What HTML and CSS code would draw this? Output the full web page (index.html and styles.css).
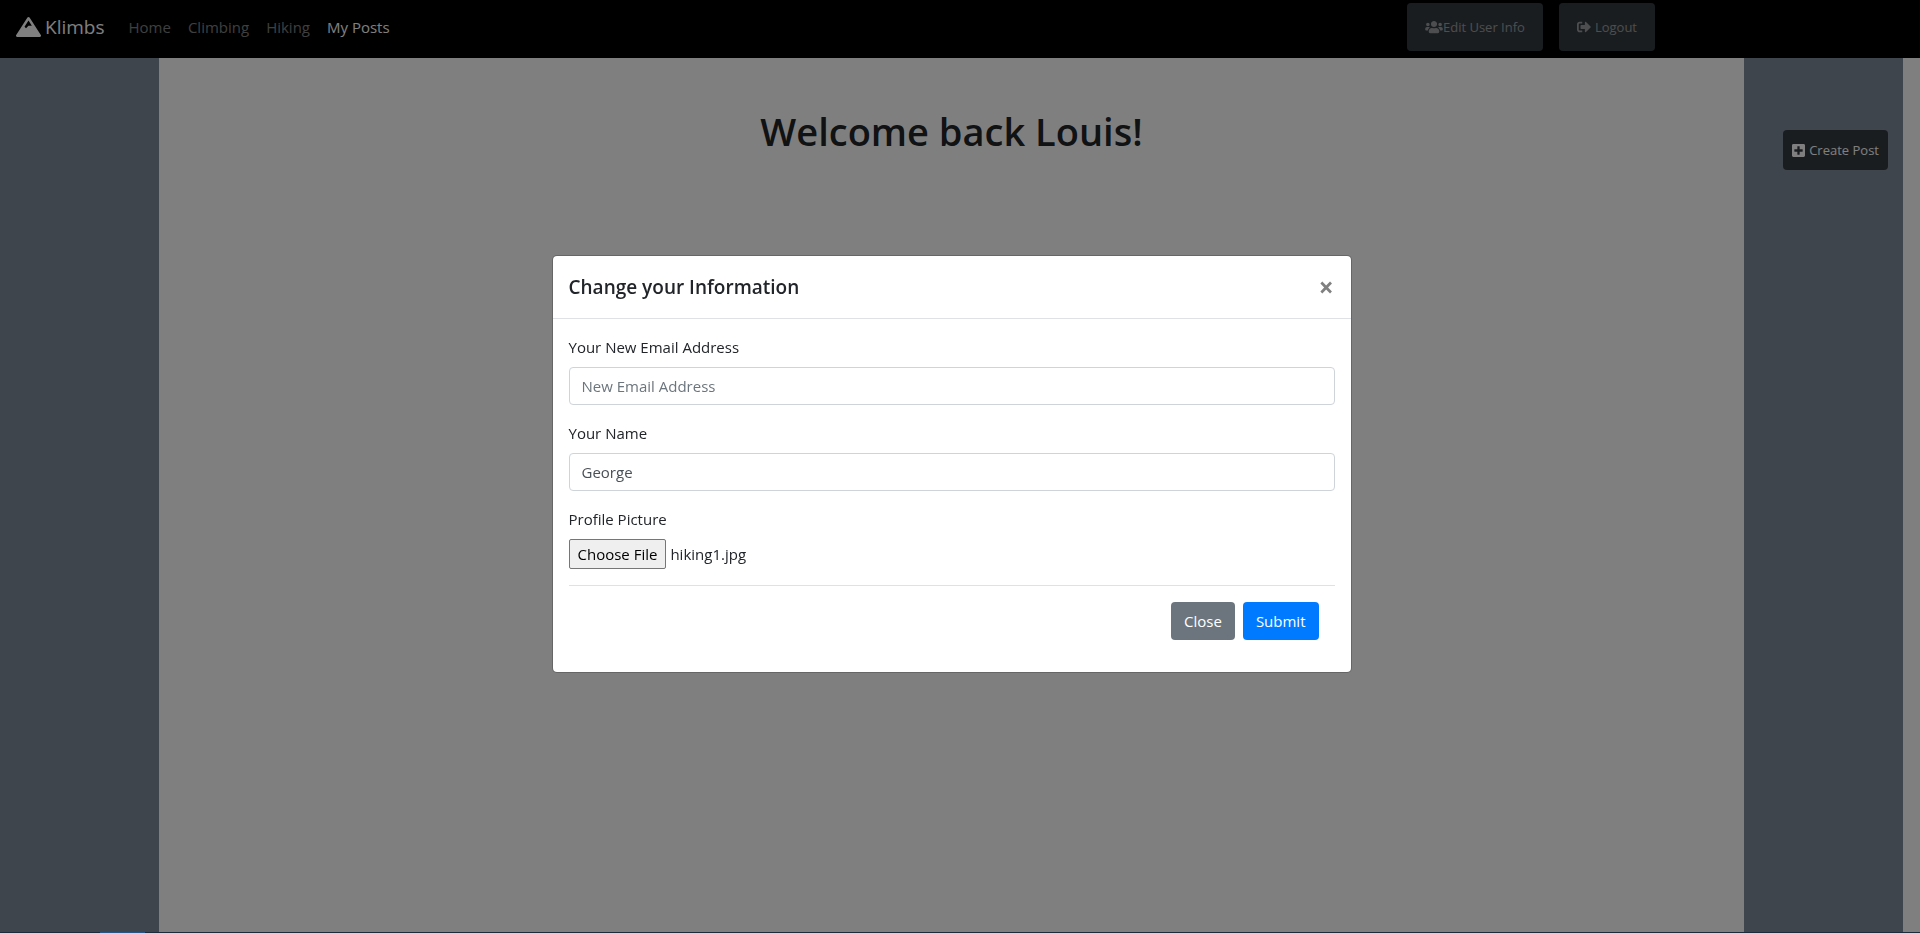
FILE: index.html
```html
<!DOCTYPE html>
<html lang="en">
<head>
<meta charset="utf-8">
<meta name="viewport" content="width=device-width, initial-scale=1">
<title>Klimbs - My Posts</title>
<link rel="stylesheet" href="styles.css">
</head>
<body>
<nav class="navbar">
  <a class="brand" href="#">
    <svg class="brand-icon" viewBox="0 0 640 512" aria-hidden="true"><path d="M634.92 462.7l-288-448C341.03 5.54 330.89 0 320 0s-21.03 5.54-26.92 14.7l-288 448a32.001 32.001 0 0 0-1.17 32.64A32.004 32.004 0 0 0 32 512h576c11.71 0 22.48-6.39 28.09-16.67a31.983 31.983 0 0 0-1.17-32.63zM320 91.18L405.39 224H320l-64 64-38.06-38.06L320 91.18z"/></svg>
    <span>Klimbs</span>
  </a>
  <div class="nav-links">
    <a class="nav-link" href="#">Home</a>
    <a class="nav-link" href="#">Climbing</a>
    <a class="nav-link" href="#">Hiking</a>
    <a class="nav-link active" href="#">My Posts</a>
  </div>
  <div class="nav-actions">
    <button class="btn-dark btn-nav" type="button"><svg class="icon-users" viewBox="0 0 640 512" aria-hidden="true"><path d="M96 224c35.3 0 64-28.7 64-64s-28.7-64-64-64-64 28.7-64 64 28.7 64 64 64zm448 0c35.3 0 64-28.7 64-64s-28.7-64-64-64-64 28.7-64 64 28.7 64 64 64zm32 32h-64c-17.6 0-33.5 7.1-45.1 18.6 40.3 22.1 68.9 62 75.1 109.4h66c17.7 0 32-14.3 32-32v-32c0-35.3-28.7-64-64-64zm-256 0c61.9 0 112-50.1 112-112S381.9 32 320 32 208 82.1 208 144s50.1 112 112 112zm76.8 32h-8.3c-20.8 10-43.9 16-68.5 16s-47.6-6-68.5-16h-8.3C179.6 288 128 339.6 128 403.2V432c0 26.5 21.5 48 48 48h288c26.5 0 48-21.5 48-48v-28.8c0-63.6-51.6-115.2-115.2-115.2zm-223.7-13.4C161.5 263.1 145.6 256 128 256H64c-35.3 0-64 28.7-64 64v32c0 17.7 14.3 32 32 32h65.9c6.3-47.4 34.9-87.3 75.2-109.4z"/></svg><span>Edit User Info</span></button>
    <button class="btn-dark btn-nav spaced" type="button"><svg class="icon" viewBox="0 0 512 512" aria-hidden="true"><path d="M497 273L329 441c-15 15-41 4.5-41-17v-96H152c-13.3 0-24-10.7-24-24v-96c0-13.3 10.7-24 24-24h136V88c0-21.4 25.9-32 41-17l168 168c9.3 9.4 9.3 24.6 0 34zM192 436v-40c0-6.6-5.4-12-12-12H96c-17.7 0-32-14.3-32-32V160c0-17.7 14.3-32 32-32h84c6.6 0 12-5.4 12-12V76c0-6.6-5.4-12-12-12H96c-53 0-96 43-96 96v192c0 53 43 96 96 96h84c6.6 0 12-5.4 12-12z"/></svg><span>Logout</span></button>
  </div>
</nav>

<div class="columns">
  <aside class="side"></aside>
  <main class="content">
    <h1 class="welcome">Welcome back Louis!</h1>
  </main>
  <aside class="side side-right">
    <button class="btn-dark btn-create" type="button"><svg class="icon-plus" viewBox="0 0 448 512" aria-hidden="true"><path d="M400 32H48C21.5 32 0 53.5 0 80v352c0 26.5 21.5 48 48 48h352c26.5 0 48-21.5 48-48V80c0-26.5-21.5-48-48-48zm-32 252c0 6.6-5.4 12-12 12h-92v92c0 6.6-5.4 12-12 12h-56c-6.6 0-12-5.4-12-12v-92H92c-6.6 0-12-5.4-12-12v-56c0-6.6 5.4-12 12-12h92v-92c0-6.6 5.4-12 12-12h56c6.6 0 12 5.4 12 12v92h92c6.6 0 12 5.4 12 12v56z"/></svg><span>Create Post</span></button>
  </aside>
</div>

<div class="backdrop">
  <section class="modal" role="dialog" aria-modal="true" aria-labelledby="modal-title">
    <header class="modal-header">
      <h2 class="modal-title" id="modal-title">Change your Information</h2>
      <button class="modal-close" type="button" aria-label="Close dialog">×</button>
    </header>
    <form class="modal-body">
      <div class="field">
        <label for="email">Your New Email Address</label>
        <input class="text-input" id="email" type="email" placeholder="New Email Address">
      </div>
      <div class="field">
        <label for="name">Your Name</label>
        <input class="text-input" id="name" type="text" value="George">
      </div>
      <div class="field">
        <label for="picture">Profile Picture</label>
        <input class="file-input" id="picture" type="file">
      </div>
      <div class="modal-footer">
        <button class="btn btn-secondary" type="button">Close</button>
        <button class="btn btn-primary" type="submit">Submit</button>
      </div>
    </form>
  </section>
</div>
<div class="bottom-strip"><div class="bottom-active"></div></div>
<script src="script.js"></script>
</body>
</html>
```

FILE: styles.css
```css
*,
*::before,
*::after {
  box-sizing: border-box;
}

body {
  margin: 0;
  min-height: 100vh;
  display: flex;
  flex-direction: column;
  background: #fff;
  color: #212529;
  font-family: "Open Sans", "Noto Sans", sans-serif;
  font-size: 15px;
  line-height: 24px;
}

button,
input {
  font: inherit;
}

svg {
  display: block;
  flex: none;
  fill: currentColor;
}

.navbar {
  display: flex;
  align-items: center;
  height: 58px;
  padding: 0 16px 4px;
  background: #000;
}

.brand {
  display: flex;
  align-items: center;
  gap: 4px;
  color: #fff;
  font-size: 19px;
  text-decoration: none;
}

.brand-icon {
  width: 25px;
  height: 20px;
}

.nav-links {
  display: flex;
  gap: 17px;
  margin-left: 24px;
}

.nav-link {
  color: rgba(255, 255, 255, 0.5);
  text-decoration: none;
}

.nav-link.active {
  color: #fff;
}

.nav-actions {
  display: flex;
  gap: 16px;
  margin: 0 249px 0 auto;
}

.btn-dark {
  display: flex;
  align-items: center;
  border: 0;
  border-radius: 4px;
  background: #343a40;
  color: #fff;
  font-size: 13px;
  white-space: nowrap;
}

.btn-nav {
  height: 48px;
  padding: 0 18px;
  color: rgba(255, 255, 255, 0.5);
}

.spaced {
  gap: 4px;
}

.icon {
  width: 14px;
  height: 14px;
}

.icon-users {
  width: 18px;
  height: 14px;
}

.icon-plus {
  width: 13px;
  height: 15px;
}

.columns {
  flex: 1;
  display: grid;
  grid-template-columns: 1fr 10fr 1fr;
  margin-right: 17px;
}

.side {
  background: #7c8a9b;
}

.side-right {
  display: flex;
  justify-content: flex-end;
  align-items: flex-start;
  padding: 72px 15px 0 0;
}

.btn-create {
  gap: 4px;
  height: 40px;
  padding: 0 9px;
}

.welcome {
  margin: 49px 0 0;
  font-size: 38px;
  font-weight: 600;
  line-height: 48px;
  text-align: center;
}

.backdrop {
  position: fixed;
  inset: 0;
  display: flex;
  justify-content: center;
  align-items: flex-start;
  padding: 255px 17px 0 0;
  background: rgba(0, 0, 0, 0.5);
}

.modal {
  width: 100%;
  max-width: 800px;
  border: 1px solid rgba(0, 0, 0, 0.2);
  border-radius: 5px;
  background: #fff;
  background-clip: padding-box;
}

.modal-header {
  display: flex;
  justify-content: space-between;
  align-items: center;
  padding: 16px;
  border-bottom: 1px solid #dee2e6;
}

.modal-title {
  margin: 0;
  font-size: 19px;
  font-weight: 600;
  line-height: 30px;
}

.modal-close {
  padding: 0 1px;
  border: 0;
  background: none;
  color: #808080;
  font-size: 26px;
  font-weight: 700;
  line-height: 24px;
}

.modal-body {
  padding: 16px;
}

.field {
  display: flex;
  flex-direction: column;
  gap: 8px;
  margin-bottom: 16px;
}

.text-input {
  width: 100%;
  height: 38px;
  padding: 6px 12px;
  border: 1px solid #ced4da;
  border-radius: 4px;
  background: #fff;
  color: #495057;
}

.text-input::placeholder {
  color: #6c757d;
  opacity: 1;
}

.file-input {
  width: 100%;
  height: 30px;
}

.file-input::file-selector-button {
  height: 30px;
  padding: 1px 8px;
  border: 1px solid #767676;
  border-radius: 2px;
  background: #efefef;
  color: #000;
  font: inherit;
}

.modal-footer {
  display: flex;
  justify-content: flex-end;
  gap: 8px;
  padding: 16px;
  border-top: 1px solid #dee2e6;
}

.btn {
  height: 38px;
  padding: 0 13px;
  border: 0;
  border-radius: 4px;
  color: #fff;
}

.btn-secondary {
  background: #6c757d;
}

.btn-primary {
  background: #007bff;
}

.bottom-strip {
  position: fixed;
  right: 0;
  bottom: 0;
  left: 0;
  height: 1px;
  padding-left: 100px;
  background: #1b2b3b;
}

.bottom-active {
  width: 45px;
  height: 1px;
  background: #265688;
}
```

FILE: script.js
```js
const picture = document.getElementById("picture");
const selection = new DataTransfer();
selection.items.add(new File([""], "hiking1.jpg", { type: "image/jpeg" }));
picture.files = selection.files;
```
